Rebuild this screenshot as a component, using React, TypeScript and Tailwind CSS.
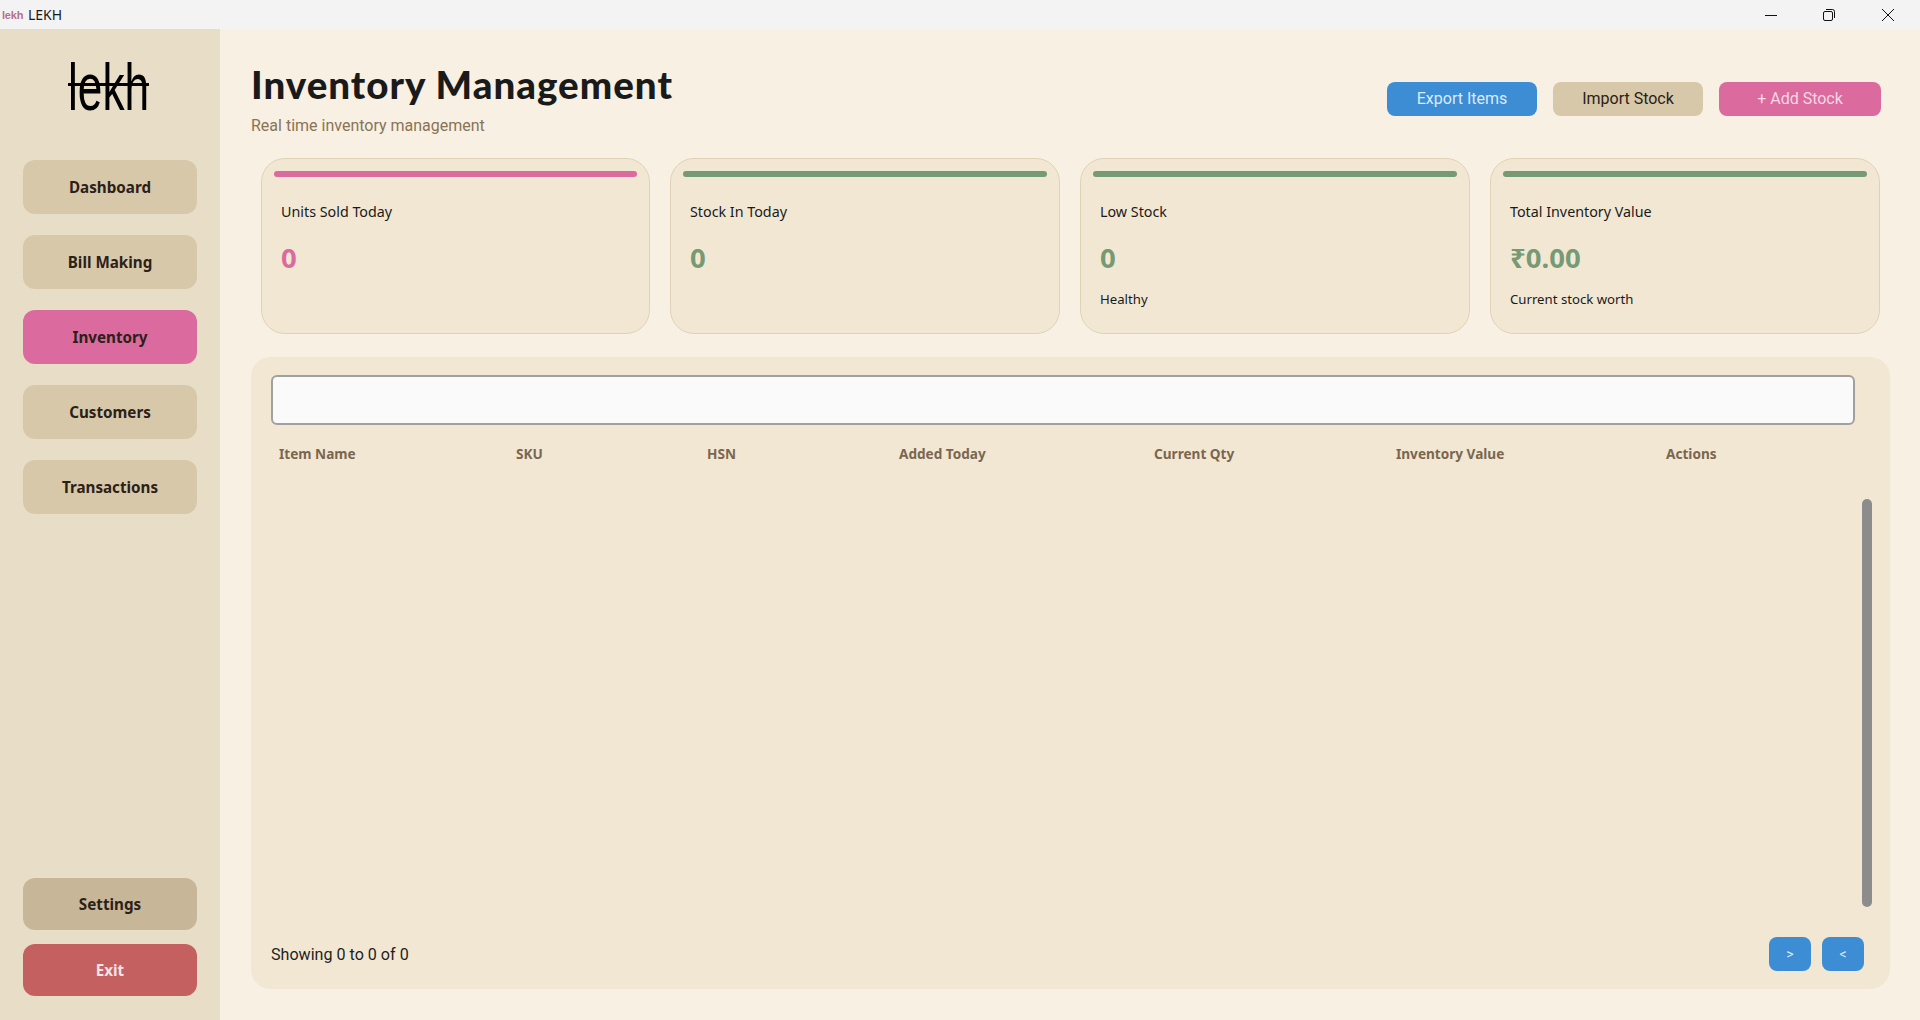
import React from 'react';

const navItems = ['Dashboard', 'Bill Making', 'Inventory', 'Customers', 'Transactions'];
const columns = ['Item Name', 'SKU', 'HSN', 'Added Today', 'Current Qty', 'Inventory Value', 'Actions'];

const stats = [
  { label: 'Units Sold Today', value: '0', note: '', bar: 'bg-[#db6a9e]', text: 'text-[#db6a9e]' },
  { label: 'Stock In Today', value: '0', note: '', bar: 'bg-[#769a74]', text: 'text-[#769a74]' },
  { label: 'Low Stock', value: '0', note: 'Healthy', bar: 'bg-[#769a74]', text: 'text-[#769a74]' },
  { label: 'Total Inventory Value', value: '₹0.00', note: 'Current stock worth', bar: 'bg-[#769a74]', text: 'text-[#769a74]' },
];

const TitleBar = () => (
  <div className="h-[29px] shrink-0 bg-[#f3f3f3] flex items-center">
    <span className="w-[20px] ml-[2px] text-[11px] leading-[12px] font-bold tracking-[-0.2px] text-[#b8708f] font-['Liberation_Sans',sans-serif]">lekh</span>
    <span className="ml-[6px] text-[14px] text-[#1a1a1a] font-['Noto_Sans',sans-serif]">LEKH</span>
    <div className="ml-auto flex items-center h-full pr-[26px] gap-[46px]">
      <svg width="12" height="12" viewBox="0 0 12 12" fill="none" stroke="#111" strokeWidth="1"><path d="M0 6.5h12" /></svg>
      <svg width="12" height="12" viewBox="0 0 12 12" fill="none" stroke="#111" strokeWidth="1"><rect x="0.5" y="2.5" width="9" height="9" rx="1.5" /><path d="M3 .5h6.5a2 2 0 0 1 2 2V9" /></svg>
      <svg className="ml-px" width="12" height="12" viewBox="0 0 12 12" fill="none" stroke="#111" strokeWidth="1"><path d="M0 0l12 12M12 0L0 12" /></svg>
    </div>
  </div>
);

const Logo = () => (
  <div className="h-[131px] shrink-0 flex justify-center pt-[34px] pr-[3px]">
    <div className="relative w-[81px] h-[50px]">
      <span className="absolute left-[-20px] top-[-16px] w-[121px] text-center text-[66px] leading-[80px] text-black scale-x-[0.67] font-['Liberation_Sans',sans-serif]">lekh</span>
      <div className="absolute left-0 top-[20px] w-[81px] h-[3px] bg-black" />
    </div>
  </div>
);

const Sidebar = () => (
  <aside className="w-[220px] shrink-0 bg-[#e8ddc6] flex flex-col px-[23px] pb-[24px] font-['Noto_Sans',sans-serif]">
    <Logo />
    <nav className="flex flex-col gap-[21px]">
      {navItems.map((item) => (
        <div
          key={item}
          className={`h-[54px] rounded-[12px] flex items-center justify-center text-[15.2px] font-bold text-[#2b2118] ${item === 'Inventory' ? 'bg-[#db6a9e]' : 'bg-[#d8c8aa]'}`}
        >
          {item}
        </div>
      ))}
    </nav>
    <div className="mt-auto flex flex-col gap-[14px]">
      <div className="h-[52px] rounded-[12px] bg-[#c8b698] flex items-center justify-center text-[15.2px] font-bold text-[#2b2118]">Settings</div>
      <div className="h-[52px] rounded-[12px] bg-[#c46060] flex items-center justify-center text-[15.2px] font-bold text-[#f0e4ea]">Exit</div>
    </div>
  </aside>
);

const Header = () => (
  <div className="h-[129px] shrink-0 flex justify-between">
    <div className="pt-[29px]">
      <h1 className="text-[38.5px] leading-[52px] tracking-[1px] font-black text-[#1a1a1a] font-['Lato',sans-serif]">Inventory Management</h1>
      <p className="text-[16px] leading-[20px] mt-[6px] text-[#8a7356] font-['Roboto',sans-serif]">Real time inventory management</p>
    </div>
    <div className="flex gap-[16px] pt-[53px] pr-[9px] text-[16px] font-['Roboto',sans-serif]">
      <button className="w-[150px] h-[34px] rounded-[8px] bg-[#3c8dd3] text-[#dcebf7]">Export Items</button>
      <button className="w-[150px] h-[34px] rounded-[8px] bg-[#d8c8aa] text-[#2b2118]">Import Stock</button>
      <button className="w-[162px] h-[34px] rounded-[8px] bg-[#db6a9e] text-[#f6d8e5]">+ Add Stock</button>
    </div>
  </div>
);

const StatCards = () => (
  <div className="ml-[10px] mr-[10px] grid grid-cols-[389px_1fr_1fr_1fr] gap-[20px] h-[176px] shrink-0 font-['Noto_Sans',sans-serif]">
    {stats.map((stat) => (
      <div key={stat.label} className="bg-[#f2e7d3] border border-[#e0d3b5] rounded-[24px] px-[12px] pt-[12px]">
        <div className={`h-[6px] rounded-full ${stat.bar}`} />
        <div className="px-[7px]">
          <div className="mt-[25px] text-[14.3px] leading-[20px] text-[#1a1a1a]">{stat.label}</div>
          <div className={`mt-[17px] text-[27.5px] leading-[38px] font-bold ${stat.text}`}>{stat.value}</div>
          <div className="mt-[13px] text-[13.2px] leading-[18px] text-[#1a1a1a]">{stat.note}</div>
        </div>
      </div>
    ))}
  </div>
);

const InventoryPanel = () => (
  <div className="mt-[23px] h-[632px] shrink-0 bg-[#f2e7d3] rounded-[20px] pl-[20px] pr-[18px] pt-[18px] flex flex-col">
    <input className="h-[50px] shrink-0 mr-[17px] bg-[#fafafa] border-2 border-[#a0a0a0] rounded-[6px] outline-none" />
    <div className="mt-[16px] h-[26px] shrink-0 pl-[8px] grid grid-cols-[237px_191px_192px_255px_242px_270px_1fr] items-center text-[13.6px] font-bold text-[#7a6650] font-['Noto_Sans',sans-serif]">
      {columns.map((col) => (
        <div key={col}>{col}</div>
      ))}
    </div>
    <div className="mt-[32px] h-[408px] shrink-0 flex justify-end">
      <div className="w-[10px] h-full rounded-full bg-[#8c8c8c]" />
    </div>
    <div className="mt-[30px] h-[34px] shrink-0 flex items-center justify-between pr-[8px] font-['Roboto',sans-serif]">
      <span className="text-[16.1px] pt-[2px] text-[#1f1f1f]">Showing 0 to 0 of 0</span>
      <div className="flex gap-[11px] text-[14px] text-[#dcebf7]">
        <button className="w-[42px] h-[34px] rounded-[8px] bg-[#3c8dd3]">&gt;</button>
        <button className="w-[42px] h-[34px] rounded-[8px] bg-[#3c8dd3]">&lt;</button>
      </div>
    </div>
  </div>
);

const App: React.FC = () => {
  return (
    <div className="w-[1920px] h-[1020px] flex flex-col overflow-hidden bg-[#f7f0e3]">
      <TitleBar />
      <div className="flex-1 flex min-h-0">
        <Sidebar />
        <main className="flex-1 flex flex-col pl-[31px] pr-[30px]">
          <Header />
          <StatCards />
          <InventoryPanel />
        </main>
      </div>
    </div>
  );
};

export default App;
